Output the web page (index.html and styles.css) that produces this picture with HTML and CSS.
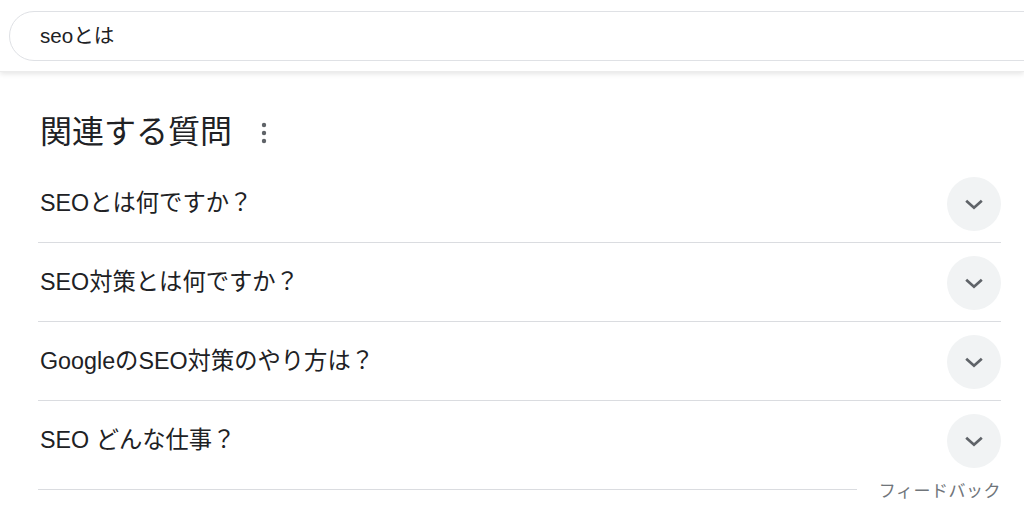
FILE: index.html
```html
<!DOCTYPE html>
<html lang="ja">
<head>
<meta charset="utf-8">
<title>seoとは</title>
<link rel="stylesheet" href="styles.css">
</head>
<body>
<header class="header">
  <div class="search">
    <span class="query">seoとは</span>
  </div>
</header>
<main class="main">
  <div class="heading">
    <h2 class="title">関連する質問</h2>
    <svg class="more" width="8" height="24" viewBox="0 0 8 24"><circle cx="4" cy="4" r="2.2"/><circle cx="4" cy="12" r="2.2"/><circle cx="4" cy="20" r="2.2"/></svg>
  </div>
  <div class="row"><span class="q">SEOとは何ですか？</span><span class="btn"><svg width="24" height="24" viewBox="0 0 24 24"><path d="M3.5 8.5 12 16l8.5-7.5"/></svg></span></div>
  <div class="row"><span class="q">SEO対策とは何ですか？</span><span class="btn"><svg width="24" height="24" viewBox="0 0 24 24"><path d="M3.5 8.5 12 16l8.5-7.5"/></svg></span></div>
  <div class="row"><span class="q">GoogleのSEO対策のやり方は？</span><span class="btn"><svg width="24" height="24" viewBox="0 0 24 24"><path d="M3.5 8.5 12 16l8.5-7.5"/></svg></span></div>
  <div class="row last"><span class="q">SEO どんな仕事？</span><span class="btn"><svg width="24" height="24" viewBox="0 0 24 24"><path d="M3.5 8.5 12 16l8.5-7.5"/></svg></span></div>
  <div class="feedback">
    <span class="line"></span>
    <span class="fb">フィードバック</span>
  </div>
</main>
</body>
</html>
```
FILE: styles.css
```css
* { box-sizing: border-box; }
html, body { margin: 0; padding: 0; background: #fff; }
body {
  width: 1024px;
  height: 522px;
  overflow: hidden;
  font-family: "Liberation Sans", "Noto Sans CJK JP", sans-serif;
  color: #202124;
}
.header {
  height: 72px;
  padding: 11px 0 0 9px;
  background: #fff;
  box-shadow: 0 2px 5px rgba(0, 0, 0, 0.1);
  border-bottom: 1px solid #ececec;
  position: relative;
  z-index: 1;
}
.search {
  height: 50px;
  margin-right: -40px;
  border: 1px solid #dfe1e5;
  border-radius: 25px;
  display: flex;
  align-items: center;
  padding-left: 30px;
}
.query {
  font-size: 20.6px;
  color: #202124;
  position: relative;
  top: -2px;
}
.main {
  padding: 0 23px 0 38px;
}
.heading {
  display: flex;
  align-items: center;
  height: 92px;
  padding: 28px 0 0 2px;
}
.title {
  margin: 0;
  font-size: 32px;
  font-weight: 400;
  line-height: 40px;
  color: #202124;
}
.more {
  margin-left: 28px;
  fill: #5f6368;
  position: relative;
  top: 1px;
}
.row {
  height: 79px;
  display: flex;
  align-items: center;
  justify-content: space-between;
  border-bottom: 1px solid #dadce0;
  padding-left: 2px;
}
.row.last { border-bottom: none; height: 78px; }
.q {
  font-size: 23.3px;
  color: #202124;
  position: relative;
  top: -2px;
}
.btn {
  width: 54px;
  height: 54px;
  border-radius: 50%;
  background: #f1f3f4;
  display: flex;
  align-items: center;
  justify-content: center;
  position: relative;
  top: 1px;
}
.btn svg {
  width: 22px;
  height: 22px;
  fill: none;
  stroke: #5f6368;
  stroke-width: 3;
}
.feedback {
  display: flex;
  align-items: center;
  gap: 22px;
  height: 20px;
}
.line {
  flex: 1;
  height: 1px;
  background: #dadce0;
}
.fb {
  font-size: 17px;
  color: #70757a;
  letter-spacing: 0.5px;
}
```
